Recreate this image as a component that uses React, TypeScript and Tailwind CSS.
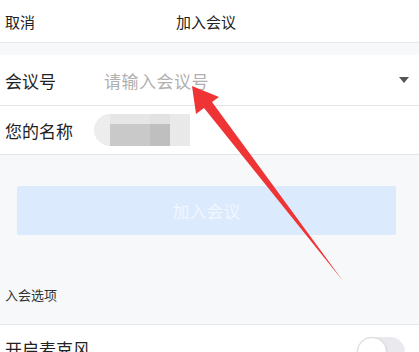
import React from 'react';

const font = { fontFamily: '"Noto Sans CJK SC", "Noto Sans", sans-serif' };

export default function App() {
  return (
    <div
      className="relative w-[419px] h-[352px] overflow-hidden bg-[#f7f8fa] text-[#222]"
      style={font}
    >
      {/* Header */}
      <header className="relative h-[43px] bg-white border-b border-[#e8e8e8] flex items-center px-[5px]">
        <span className="text-[15px] leading-none">取消</span>
        <span className="absolute left-0 right-[7px] text-center text-[15px] leading-none pointer-events-none">
          加入会议
        </span>
      </header>

      <div className="h-[12px]" />

      {/* Form */}
      <div className="bg-white border-b border-[#e5e5e5]">
        <div className="h-[51px] flex items-center border-b border-[#e5e5e5] pl-[5px] pr-[10px]">
          <span className="w-[99px] text-[17px] leading-none">会议号</span>
          <span className="flex-1 text-[17px] leading-none text-[#b0b0b0] tracking-[0.5px]">
            请输入会议号
          </span>
          <span className="w-0 h-0 border-l-[5px] border-r-[5px] border-t-[6px] border-l-transparent border-r-transparent border-t-[#555]" />
        </div>
        <div className="h-[48px] flex items-center pl-[5px]">
          <span className="w-[89px] text-[17px] leading-none">您的名称</span>
          <div className="flex h-[32px] w-[96px] rounded-l-full overflow-hidden">
            <div className="w-[16px] bg-[#ededed]" />
            <div className="w-[40px] flex flex-col">
              <div className="h-[10px] bg-[#e6e6e6]" />
              <div className="flex-1 bg-[#c9c9c9]" />
            </div>
            <div className="w-[20px] flex flex-col">
              <div className="h-[10px] bg-[#e2e2e2]" />
              <div className="flex-1 bg-[#bfbfbf]" />
            </div>
            <div className="flex-1 bg-[#e9e9e9]" />
          </div>
        </div>
      </div>

      {/* Button */}
      <div className="pl-[17px] pr-[23px] pt-[31px]">
        <button
          type="button"
          className="w-full h-[49px] rounded-[2px] bg-[#dbeafc] text-[#f1f6ff] text-[17px] leading-none"
        >
          加入会议
        </button>
      </div>

      <div className="h-[89px] flex items-center px-[5px] pt-[29px]">
        <span className="text-[13px] leading-none text-[#333]">入会选项</span>
      </div>

      {/* Options */}
      <div className="bg-white border-t border-[#e8e8e8] h-[60px] flex items-start pl-[5px] pr-[14px] pt-[12px]">
        <span className="flex-1 text-[17px] leading-none mt-[3px]">开启麦克风</span>
        <div className="relative w-[48px] h-[30px] rounded-full bg-[#e9e9ee]">
          <div className="absolute left-0 top-0 w-[30px] h-[30px] rounded-full bg-white border border-[#dcdcdc] shadow-sm" />
        </div>
      </div>

      {/* Red annotation arrow */}
      <svg
        className="absolute left-0 top-0 pointer-events-none"
        width="419"
        height="352"
        viewBox="0 0 419 352"
      >
        <polygon
          points="192,86 219,97 212,102 343,281 204,108 196,114"
          fill="#ee3434"
        />
      </svg>
    </div>
  );
}
